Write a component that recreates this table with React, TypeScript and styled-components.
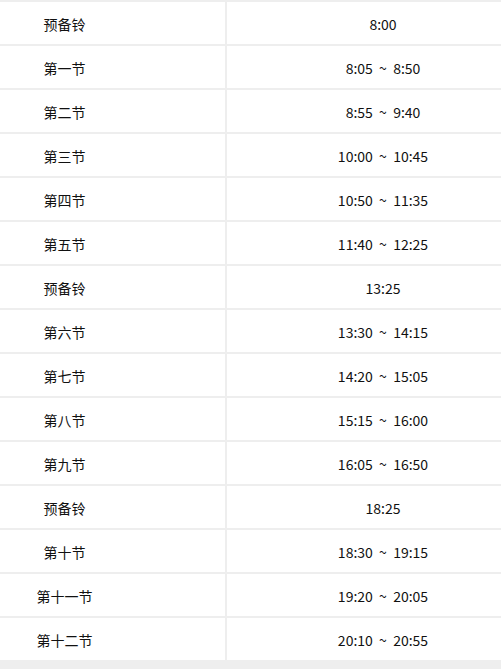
import React from "react";
import styled, { createGlobalStyle } from "styled-components";

const rows: [string, string][] = [
  ["预备铃", "8:00"],
  ["第一节", "8:05 ~ 8:50"],
  ["第二节", "8:55 ~ 9:40"],
  ["第三节", "10:00 ~ 10:45"],
  ["第四节", "10:50 ~ 11:35"],
  ["第五节", "11:40 ~ 12:25"],
  ["预备铃", "13:25"],
  ["第六节", "13:30 ~ 14:15"],
  ["第七节", "14:20 ~ 15:05"],
  ["第八节", "15:15 ~ 16:00"],
  ["第九节", "16:05 ~ 16:50"],
  ["预备铃", "18:25"],
  ["第十节", "18:30 ~ 19:15"],
  ["第十一节", "19:20 ~ 20:05"],
  ["第十二节", "20:10 ~ 20:55"],
];

const GlobalStyle = createGlobalStyle`
  html, body {
    margin: 0;
    padding: 0;
    background: #eeeeee;
    overflow: hidden;
  }
  body {
    font-family: "Noto Sans CJK SC", "Noto Sans", sans-serif;
    font-size: 14px;
    color: #111;
  }
`;

// the table is wider than the window and scrolled a bit to the right
const Wrap = styled.div`
  width: 635px;
  margin-left: -96px;
`;

const Table = styled.table`
  width: 635px;
  table-layout: fixed;
  border-collapse: separate;
  border-spacing: 0 2px;
  background: #eeeeee;
`;

const Cell = styled.td<{ $wide?: boolean }>`
  box-sizing: border-box;
  height: 42px;
  padding: 2px 0 0;
  background: #ffffff;
  text-align: center;
  vertical-align: middle;
  line-height: 20px;
  width: ${(p) => (p.$wide ? "314px" : "321px")};
  border-left: ${(p) => (p.$wide ? "2px solid #eeeeee" : "none")};
  white-space: pre;
`;

export default function App() {
  return (
    <>
      <GlobalStyle />
      <Wrap>
        <Table>
          <tbody>
            {rows.map(([name, time], i) => (
              <tr key={i}>
                <Cell>{name}</Cell>
                <Cell $wide>{time.replace(" ~ ", "  ~  ")}</Cell>
              </tr>
            ))}
          </tbody>
        </Table>
      </Wrap>
    </>
  );
}
